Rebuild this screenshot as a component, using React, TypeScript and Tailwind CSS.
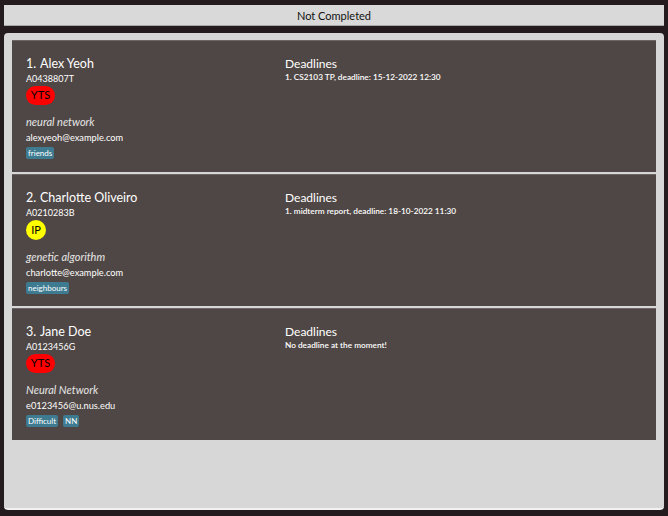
import React from 'react';

type Person = {
  name: string;
  id: string;
  status: 'YTS' | 'IP';
  project: string;
  email: string;
  tags: string[];
  deadlines: string[];
};

const people: Person[] = [
  {
    name: 'Alex Yeoh',
    id: 'A0438807T',
    status: 'YTS',
    project: 'neural network',
    email: 'alexyeoh@example.com',
    tags: ['friends'],
    deadlines: ['1. CS2103 TP, deadline: 15-12-2022 12:30'],
  },
  {
    name: 'Charlotte Oliveiro',
    id: 'A0210283B',
    status: 'IP',
    project: 'genetic algorithm',
    email: 'charlotte@example.com',
    tags: ['neighbours'],
    deadlines: ['1. midterm report, deadline: 18-10-2022 11:30'],
  },
  {
    name: 'Jane Doe',
    id: 'A0123456G',
    status: 'YTS',
    project: 'Neural Network',
    email: 'e0123456@u.nus.edu',
    tags: ['Difficult', 'NN'],
    deadlines: [],
  },
];

function StatusBadge({ status }: { status: Person['status'] }) {
  if (status === 'IP') {
    return (
      <div className="flex h-[20px] w-[20px] items-center justify-center rounded-full bg-[#ffff00] text-[11px] text-black">
        IP
      </div>
    );
  }
  return (
    <div className="flex h-[19px] w-[29px] items-center justify-center rounded-full bg-[#ff0000] text-[11px] text-black">
      YTS
    </div>
  );
}

function PersonCard({ p, index }: { p: Person; index: number }) {
  return (
    <div className="flex h-[132px] border-t border-[#6e6664] bg-[#4f4745] text-white">
      <div className="w-[273px] pl-[14px] pt-[15px]">
        <div className="flex text-[12.5px] leading-[15px]">
          <span className="w-[14px]">{index}.</span>
          <span>{p.name}</span>
        </div>
        <div className="mt-[1px] text-[9px] leading-[13px]">{p.id}</div>
        <div className="mt-[1px]">
          <StatusBadge status={p.status} />
        </div>
        <div className="mt-[10px] text-[11px] italic leading-[14px] text-[#e6e6e6]">{p.project}</div>
        <div className="mt-[2px] text-[9.25px] leading-[13px]">{p.email}</div>
        <div className="mt-[3px] flex gap-[5px]">
          {p.tags.map((t) => (
            <span key={t} className="rounded-[2px] bg-[#3e7b91] px-[2px] text-[8px] leading-[12px] text-white">
              {t}
            </span>
          ))}
        </div>
      </div>
      <div className="pt-[15px]">
        <div className="text-[12px] leading-[15px]">Deadlines</div>
        <div className="text-[8.25px] font-semibold leading-[12px]">
          {p.deadlines.length === 0
            ? 'No deadline at the moment!'
            : p.deadlines.map((d) => <div key={d}>{d}</div>)}
        </div>
      </div>
    </div>
  );
}

export default function App() {
  return (
    <div
      className="flex h-[516px] w-[668px] flex-col bg-[#231b1d] px-[4px] pt-[5px]"
      style={{ fontFamily: 'Lato, "Noto Sans", sans-serif' }}
    >
      <div className="flex h-[21px] items-center justify-center border-b border-[#a8a8a8] bg-[#d9d9d9] pt-[2px] text-[11px] text-[#111]">
        Not Completed
      </div>
      <div className="mt-[7px] flex h-[477px] flex-col gap-[2px] rounded-[4px] border-b-2 border-[#f2f2f2] bg-[#d7d7d7] px-[8px] pt-[7px]">
        {people.map((p, i) => (
          <PersonCard key={p.id} p={p} index={i + 1} />
        ))}
      </div>
    </div>
  );
}
